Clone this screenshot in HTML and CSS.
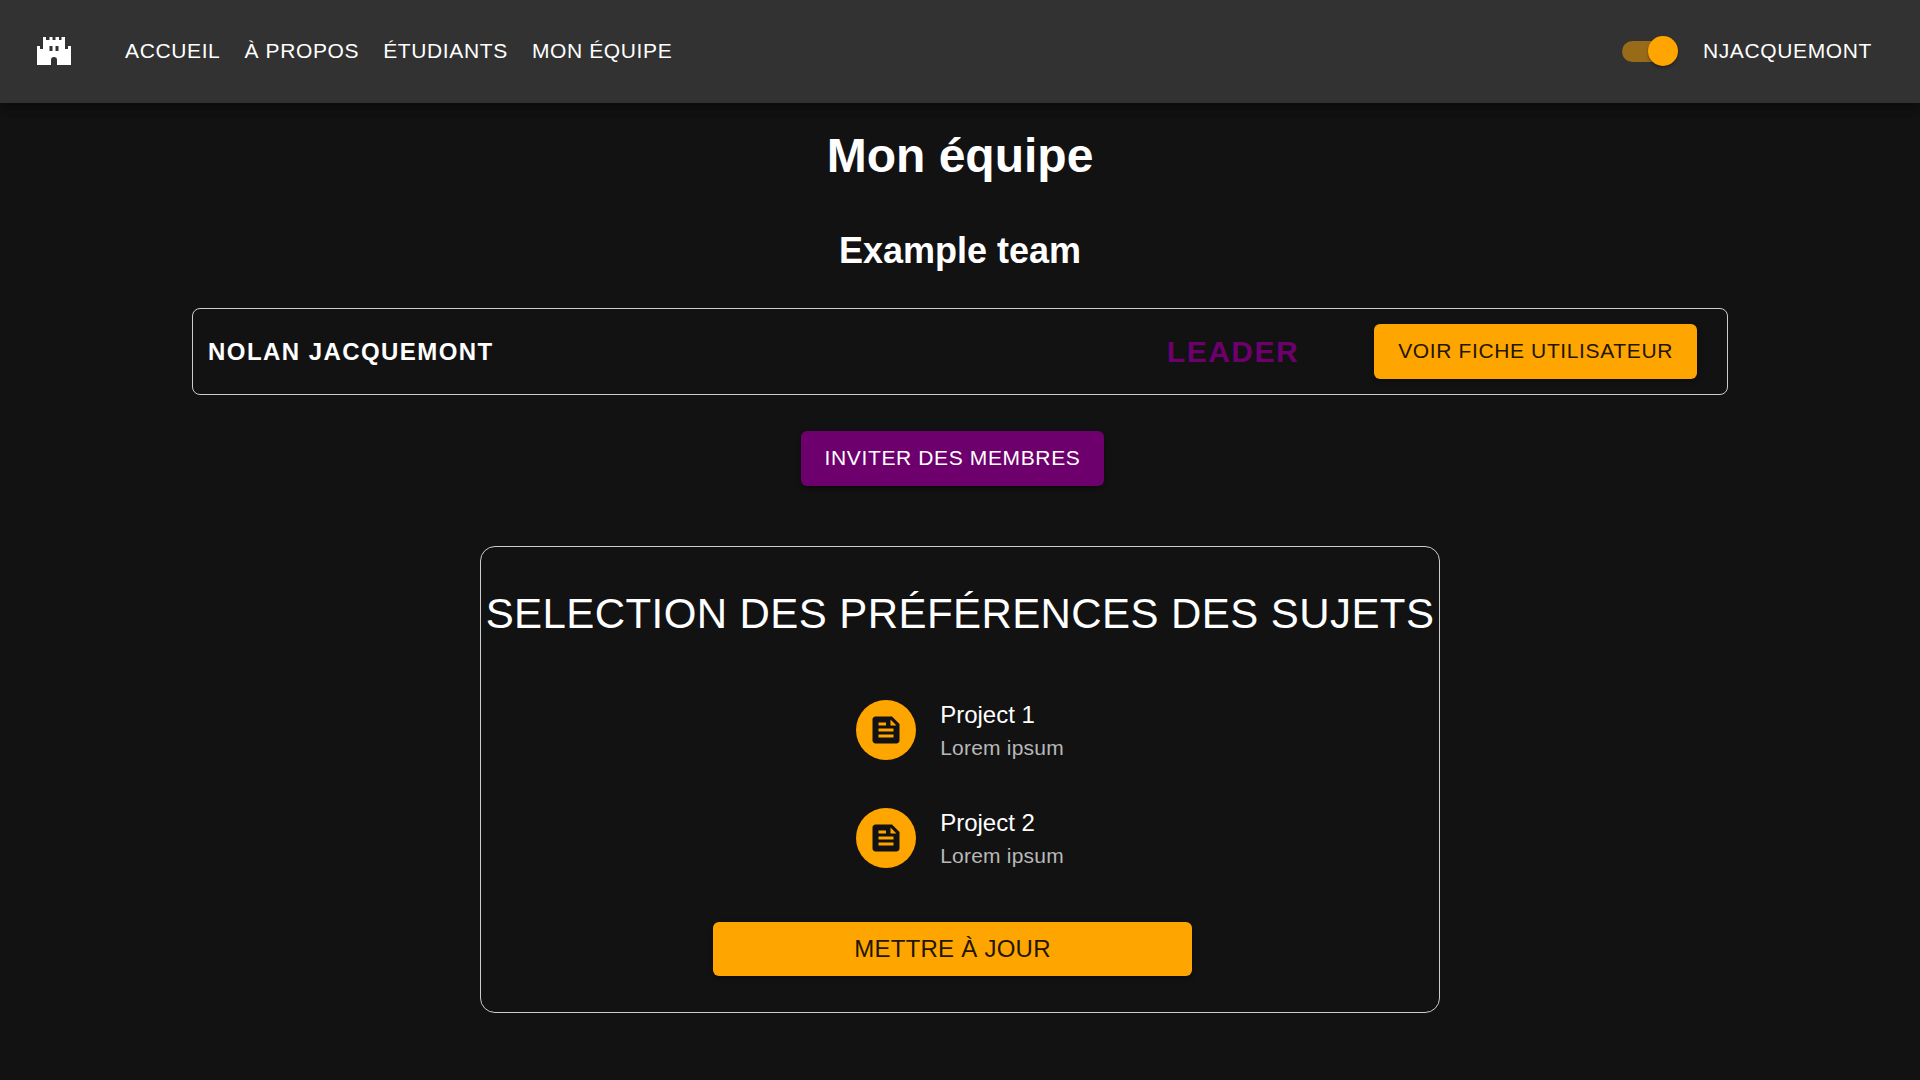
FILE: index.html
```html
<!DOCTYPE html>
<html lang="fr">
<head>
<meta charset="utf-8">
<meta name="viewport" content="width=device-width, initial-scale=1">
<title>Mon équipe</title>
<link rel="stylesheet" href="styles.css">
</head>
<body>
<header class="appbar">
  <a class="logo" href="#" aria-label="Accueil">
    <svg viewBox="0 0 36 36" width="36" height="36" aria-hidden="true">
      <path fill-rule="evenodd" d="M1 13h3v3h3V4h3v3h3.500V4h3v3h3V4h3.500v3h2.500V4H29v12h3v-3h3v19H21v-5a3 3 0 0 0-6 0v5H1zM13.500 13v5h3v-5zM19.500 13v5h3v-5z"/>
    </svg>
  </a>
  <nav class="nav">
    <a href="#">ACCUEIL</a>
    <a href="#">À PROPOS</a>
    <a href="#">ÉTUDIANTS</a>
    <a href="#">MON ÉQUIPE</a>
  </nav>
  <input class="switch" type="checkbox" role="switch" aria-label="Thème sombre" checked>
  <a class="user" href="#">NJACQUEMONT</a>
</header>
<main class="page">
  <h1>Mon équipe</h1>
  <h2>Example team</h2>
  <section class="member">
    <span class="member-name">NOLAN JACQUEMONT</span>
    <span class="member-role">LEADER</span>
    <button class="button" type="button">VOIR FICHE UTILISATEUR</button>
  </section>
  <button class="button invite" type="button">INVITER DES MEMBRES</button>
  <section class="preferences">
    <h3>SELECTION DES PRÉFÉRENCES DES SUJETS</h3>
    <ul class="projects">
      <li>
        <span class="avatar"><svg viewBox="0 0 24 24" width="36" height="36" aria-hidden="true"><path d="M16 3H5c-1.1 0-2 .9-2 2v14c0 1.1.9 2 2 2h14c1.1 0 2-.9 2-2V8l-5-5zM7 7h5v2H7V7zm10 10H7v-2h10v2zm0-4H7v-2h10v2zm-2-4V5l4 4h-4z"/></svg></span>
        <div><p class="project-name">Project 1</p><p class="project-text">Lorem ipsum</p></div>
      </li>
      <li>
        <span class="avatar"><svg viewBox="0 0 24 24" width="36" height="36" aria-hidden="true"><path d="M16 3H5c-1.1 0-2 .9-2 2v14c0 1.1.9 2 2 2h14c1.1 0 2-.9 2-2V8l-5-5zM7 7h5v2H7V7zm10 10H7v-2h10v2zm0-4H7v-2h10v2zm-2-4V5l4 4h-4z"/></svg></span>
        <div><p class="project-name">Project 2</p><p class="project-text">Lorem ipsum</p></div>
      </li>
    </ul>
    <button class="button update" type="button">METTRE À JOUR</button>
  </section>
</main>
</body>
</html>
```
FILE: styles.css
```css
* {
  box-sizing: border-box;
}

body {
  margin: 0;
  background: #121212;
  color: #fff;
  font-family: "Liberation Sans", Arial, sans-serif;
}

h1, h2, h3, p, ul {
  margin: 0;
  padding: 0;
}

.appbar {
  display: flex;
  align-items: center;
  padding: 33px 48px 34px 36px;
  background: #323232;
  box-shadow: 0 3px 6px -1px rgba(0, 0, 0, 0.2), 0 6px 8px rgba(0, 0, 0, 0.14), 0 1px 15px rgba(0, 0, 0, 0.12);
}

.logo {
  display: flex;
  height: 36px;
}

.logo svg {
  fill: #fff;
}

.nav {
  display: flex;
  flex: 1;
  gap: 24px;
  margin-left: 53px;
}

.nav a,
.user {
  color: #fff;
  font-size: 21px;
  line-height: 36px;
  letter-spacing: 0.03em;
  text-decoration: none;
}

.switch {
  appearance: none;
  display: flex;
  align-items: center;
  justify-content: flex-end;
  width: 51px;
  height: 21px;
  margin: 0 30px 0 0;
  border-radius: 11px;
  background: #986b19;
}

.switch::before {
  content: "";
  flex: none;
  width: 30px;
  height: 30px;
  margin-right: -5px;
  border-radius: 50%;
  background: #ffa500;
  box-shadow: 0 2px 3px rgba(0, 0, 0, 0.3);
}

.page {
  display: flex;
  flex-direction: column;
  align-items: center;
  padding: 25px 0 60px;
}

h1 {
  font-size: 48px;
  line-height: 56px;
}

h2 {
  margin: 46px 0 36px;
  font-size: 36px;
  line-height: 42px;
}

.member {
  display: flex;
  align-items: center;
  width: 80%;
  padding: 15px 30px 15px 15px;
  border: 1px solid #ccc;
  border-radius: 8px;
}

.member-name {
  flex: 1;
  font-size: 24px;
  font-weight: bold;
  letter-spacing: 0.06em;
}

.member-role {
  margin-right: 75px;
  color: #6d006d;
  font-size: 30px;
  font-weight: bold;
  letter-spacing: 0.05em;
}

.button {
  padding: 8px 24px 10px;
  border: 0;
  border-radius: 6px;
  background: #ffa500;
  box-shadow: 0 2px 5px rgba(0, 0, 0, 0.4);
  color: #221600;
  font-family: inherit;
  font-size: 21px;
  line-height: 37px;
  letter-spacing: 0.03em;
}

.invite {
  margin: 36px 15px 60px 0;
  background: #6d006d;
  color: #fff;
}

.preferences {
  display: flex;
  flex-direction: column;
  align-items: center;
  width: 50%;
  padding: 37px 0 36px;
  border: 1px solid #ccc;
  border-radius: 15px;
}

h3 {
  margin-bottom: 53px;
  font-size: 42px;
  font-weight: normal;
  line-height: 60px;
  letter-spacing: 0.01em;
  text-align: center;
}

.projects {
  display: flex;
  flex-direction: column;
  gap: 42px;
  list-style: none;
}

.projects li {
  display: flex;
  align-items: center;
  gap: 24px;
}

.avatar {
  display: grid;
  place-items: center;
  width: 60px;
  height: 60px;
  border-radius: 50%;
  background: #ffa500;
}

.avatar svg {
  fill: #121212;
}

.project-name {
  font-size: 24px;
  line-height: 36px;
}

.project-text {
  color: #b8b8b8;
  font-size: 21px;
  line-height: 30px;
  letter-spacing: 0.01em;
}

.update {
  width: 50%;
  margin: 51px 15px 0 0;
  padding: 9px 24px;
  font-size: 24px;
  line-height: 36px;
  letter-spacing: 0.01em;
}
```
